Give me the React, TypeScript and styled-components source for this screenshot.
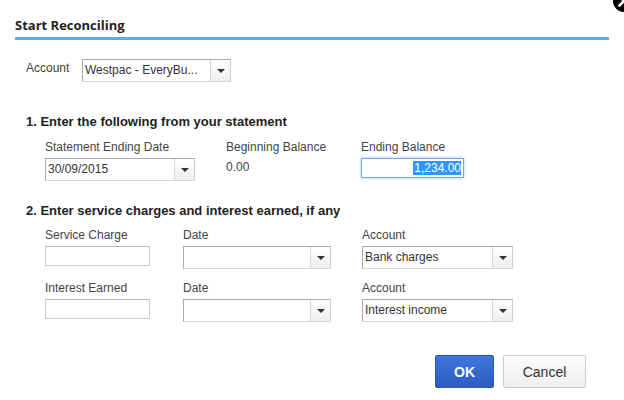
import styled, { createGlobalStyle } from "styled-components";

const GlobalStyle = createGlobalStyle`
    html, body {
        margin: 0;
        padding: 0;
        background: #ffffff;
    }
    body {
        font-family: "Liberation Sans", Arial, sans-serif;
        font-size: 12px;
        color: #444;
    }
`;

const Dialog = styled.div`
    position: relative;
    width: 624px;
    height: 400px;
    overflow: hidden;
    background: #fff;
    box-sizing: border-box;
`;

const CloseButton = styled.div`
    position: absolute;
    top: -13px;
    right: -14px;
    width: 28px;
    height: 28px;
    cursor: pointer;
`;

const Header = styled.div`
    margin: 0 15px;
    padding: 17px 0 4px;
    border-bottom: 3px solid #5aaee2;
`;

const Title = styled.div`
    font-family: "Open Sans", "Liberation Sans", sans-serif;
    font-weight: 700;
    font-size: 13px;
    line-height: 16px;
    color: #222;
`;

const Body = styled.div`
    padding: 19px 0 0 26px;
`;

const AccountRow = styled.div`
    display: flex;
    align-items: flex-start;
`;

const InlineLabel = styled.div`
    width: 56px;
    line-height: 14px;
    padding-top: 2px;
`;

const Heading = styled.div<{ $top: number; $bottom: number }>`
    margin-top: ${(p) => p.$top}px;
    margin-bottom: ${(p) => p.$bottom}px;
    font-weight: 700;
    font-size: 13px;
    line-height: 15px;
    color: #222;
`;

const FieldGrid = styled.div<{ $cols: string }>`
    display: grid;
    grid-template-columns: ${(p) => p.$cols};
    row-gap: 12px;
    padding-left: 19px;
`;

const Field = styled.div`
    display: flex;
    flex-direction: column;
    gap: 4px;
`;

const Label = styled.div`
    line-height: 14px;
    color: #444;
`;

const Value = styled.div`
    line-height: 14px;
    padding-top: 2px;
    color: #444;
`;

const SelectBox = styled.div<{ $w: number }>`
    box-sizing: border-box;
    width: ${(p) => p.$w}px;
    height: 23px;
    display: flex;
    align-items: stretch;
    border: 1px solid #a9a9a9;
    border-bottom-color: #d6d6d6;
    border-right-color: #cfcfcf;
    background: #fff;
`;

const SelectText = styled.div`
    flex: 1;
    padding-left: 2px;
    line-height: 21px;
    color: #333;
    white-space: nowrap;
    overflow: hidden;
`;

const ArrowBox = styled.div`
    box-sizing: border-box;
    width: 20px;
    display: flex;
    align-items: center;
    justify-content: center;
    border-left: 1px solid #d4d4d4;
    background: linear-gradient(#ffffff, #eeeeee);

    &::after {
        content: "";
        width: 0;
        height: 0;
        border-left: 4px solid transparent;
        border-right: 4px solid transparent;
        border-top: 4px solid #333;
    }
`;

const TextInput = styled.div<{ $w: number; $focus?: boolean }>`
    box-sizing: border-box;
    width: ${(p) => p.$w}px;
    height: 20px;
    display: flex;
    align-items: center;
    justify-content: flex-end;
    padding-right: 2px;
    border: 1px solid ${(p) => (p.$focus ? "#7aa6e4" : "#c9c9c9")};
    border-top-color: ${(p) => (p.$focus ? "#7aa6e4" : "#b9b9b9")};
    box-shadow: ${(p) => (p.$focus ? "0 0 3px rgba(90, 150, 230, 0.55)" : "none")};
    background: #fff;
`;

const Selected = styled.span`
    background: #3297fd;
    color: #fff;
    line-height: 14px;
    padding: 0 0 0 1px;
`;

const Footer = styled.div`
    display: flex;
    justify-content: flex-end;
    gap: 9px;
    padding: 33px 38px 0 0;
`;

const Button = styled.button<{ $primary?: boolean }>`
    box-sizing: border-box;
    height: 33px;
    width: ${(p) => (p.$primary ? 59 : 83)}px;
    border-radius: 2px;
    font-family: "Liberation Sans", Arial, sans-serif;
    font-size: 14px;
    font-weight: ${(p) => (p.$primary ? 700 : 400)};
    color: ${(p) => (p.$primary ? "#fff" : "#333")};
    border: 1px solid ${(p) => (p.$primary ? "#2a58b6" : "#cccccc")};
    background: ${(p) =>
        p.$primary
            ? "linear-gradient(#4076da, #2b5cc1)"
            : "linear-gradient(#fdfdfd, #eeeeee)"};
    padding: 0;
`;

const Select = ({ w, text }: { w: number; text?: string }) => (
    <SelectBox $w={w}>
        <SelectText>{text}</SelectText>
        <ArrowBox />
    </SelectBox>
);

export default function App() {
    return (
        <Dialog>
            <GlobalStyle />
            <Header>
                <Title>Start Reconciling</Title>
            </Header>
            <Body>
                <AccountRow>
                    <InlineLabel>Account</InlineLabel>
                    <Select w={149} text="Westpac - EveryBu..." />
                </AccountRow>

                <Heading $top={32} $bottom={11}>
                    1. Enter the following from your statement
                </Heading>
                <FieldGrid $cols="181px 135px auto">
                    <Field>
                        <Label>Statement Ending Date</Label>
                        <Select w={150} text="30/09/2015" />
                    </Field>
                    <Field>
                        <Label>Beginning Balance</Label>
                        <Value>0.00</Value>
                    </Field>
                    <Field>
                        <Label>Ending Balance</Label>
                        <TextInput $w={103} $focus>
                            <Selected>1,234.00</Selected>
                        </TextInput>
                    </Field>
                </FieldGrid>

                <Heading $top={22} $bottom={10}>
                    2. Enter service charges and interest earned, if any
                </Heading>
                <FieldGrid $cols="138px 179px auto">
                    <Field>
                        <Label>Service Charge</Label>
                        <TextInput $w={105} />
                    </Field>
                    <Field>
                        <Label>Date</Label>
                        <Select w={148} />
                    </Field>
                    <Field>
                        <Label>Account</Label>
                        <Select w={151} text="Bank charges" />
                    </Field>
                    <Field>
                        <Label>Interest Earned</Label>
                        <TextInput $w={105} />
                    </Field>
                    <Field>
                        <Label>Date</Label>
                        <Select w={148} />
                    </Field>
                    <Field>
                        <Label>Account</Label>
                        <Select w={151} text="Interest income" />
                    </Field>
                </FieldGrid>
            </Body>
            <Footer>
                <Button $primary>OK</Button>
                <Button>Cancel</Button>
            </Footer>
            <CloseButton>
                <svg width="28" height="28" viewBox="0 0 28 28">
                    <circle cx="14" cy="14" r="12" fill="#000" stroke="#fff" strokeWidth="2" />
                    <path d="M9.5 9.5 L18.5 18.5 M18.5 9.5 L9.5 18.5" stroke="#fff" strokeWidth="2.6" strokeLinecap="round" />
                </svg>
            </CloseButton>
        </Dialog>
    );
}
